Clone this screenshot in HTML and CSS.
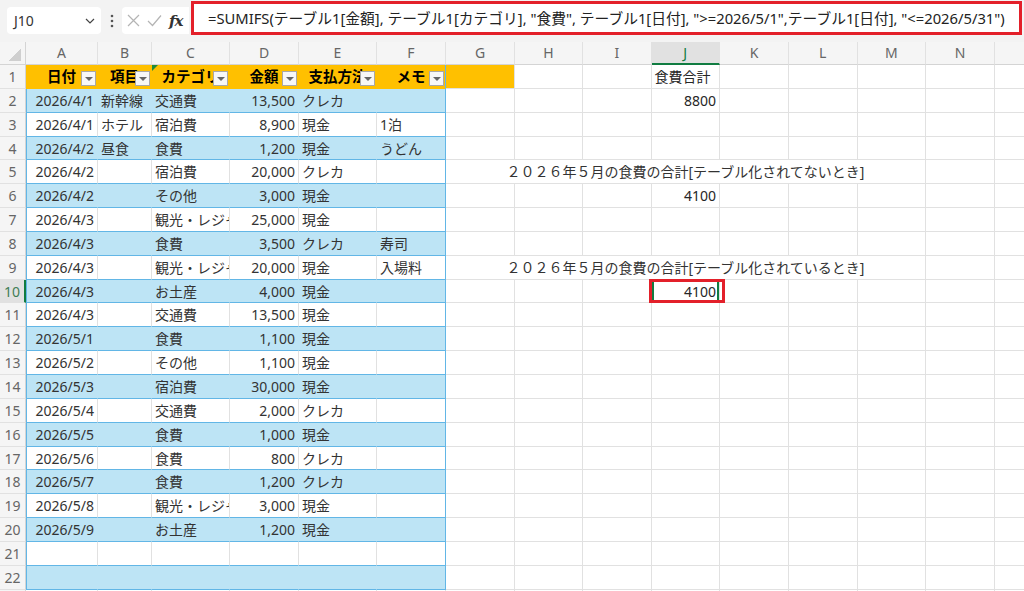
FILE: index.html
```html
<!DOCTYPE html>
<html lang="ja">
<head>
  <meta charset="UTF-8">
  <title>SUMIFS - 食費合計</title>
  <link rel="stylesheet" href="styles.css">
</head>
<body>
  <div class="toolbar">
    <div class="namebox">
      <span>J10</span>
      <svg class="chev" width="10" height="6" viewBox="0 0 10 6"><path d="M1 1 L5 5 L9 1" fill="none" stroke="#444" stroke-width="1.2"/></svg>
    </div>
    <svg class="dots" width="4" height="14" viewBox="0 0 4 14"><circle cx="2" cy="2" r="1.3"/><circle cx="2" cy="7" r="1.3"/><circle cx="2" cy="12" r="1.3"/></svg>
    <div class="fxbox">
      <svg width="13" height="13" viewBox="0 0 13 13"><path d="M1 1 L12 12 M12 1 L1 12" stroke="#b4b4b4" stroke-width="1.2"/></svg>
      <svg width="15" height="13" viewBox="0 0 15 13"><path d="M1 7 L5.5 11.5 L14 1.5" fill="none" stroke="#b4b4b4" stroke-width="1.2"/></svg>
      <span class="fx">fx</span>
    </div>
    <div class="formula">=SUMIFS(テーブル1[金額], テーブル1[カテゴリ], "食費", テーブル1[日付], "&gt;=2026/5/1",テーブル1[日付], "&lt;=2026/5/31")</div>
  </div>

  <div class="sheet" id="sheet"></div>

  <script>
    // O is off the right edge, so its letter isn't shown
    const cols = ['A', 'B', 'C', 'D', 'E', 'F', 'G', 'H', 'I', 'J', 'K', 'L', 'M', 'N', ''];
    const heads = ['日付', '項目', 'カテゴリ', '金額', '支払方法', 'メモ'];

    // date, item, category, amount, payment, memo
    const rows = [
      ['2026/4/1', '新幹線', '交通費', '13,500', 'クレカ', ''],
      ['2026/4/1', 'ホテル', '宿泊費', '8,900', '現金', '1泊'],
      ['2026/4/2', '昼食', '食費', '1,200', '現金', 'うどん'],
      ['2026/4/2', '', '宿泊費', '20,000', 'クレカ', ''],
      ['2026/4/2', '', 'その他', '3,000', '現金', ''],
      ['2026/4/3', '', '観光・レジャー', '25,000', '現金', ''],
      ['2026/4/3', '', '食費', '3,500', 'クレカ', '寿司'],
      ['2026/4/3', '', '観光・レジャー', '20,000', '現金', '入場料'],
      ['2026/4/3', '', 'お土産', '4,000', '現金', ''],
      ['2026/4/3', '', '交通費', '13,500', '現金', ''],
      ['2026/5/1', '', '食費', '1,100', '現金', ''],
      ['2026/5/2', '', 'その他', '1,100', '現金', ''],
      ['2026/5/3', '', '宿泊費', '30,000', '現金', ''],
      ['2026/5/4', '', '交通費', '2,000', 'クレカ', ''],
      ['2026/5/5', '', '食費', '1,000', '現金', ''],
      ['2026/5/6', '', '食費', '800', 'クレカ', ''],
      ['2026/5/7', '', '食費', '1,200', 'クレカ', ''],
      ['2026/5/8', '', '観光・レジャー', '3,000', '現金', ''],
      ['2026/5/9', '', 'お土産', '1,200', '現金', ''],
      ['', '', '', '', '', ''],
      ['', '', '', '', '', '']
    ];

    // cells right of the table, in column J
    const side = {
      1: { text: '食費合計' },
      2: { text: '8800', cls: 'num' },
      5: { text: '２０２６年５月の食費の合計[テーブル化されてないとき]', note: true },
      6: { text: '4100', cls: 'num' },
      9: { text: '２０２６年５月の食費の合計[テーブル化されているとき]', note: true },
      10: { text: '4100', cls: 'num', sel: true }
    };

    const sheet = document.getElementById('sheet');

    function cell(cls, text) {
      const el = document.createElement('div');
      el.className = 'cell ' + cls;
      if (text) el.textContent = text;
      sheet.appendChild(el);
      return el;
    }

    // column letters
    cell('corner');
    cols.forEach(c => cell('ch' + (c === 'J' ? ' sel' : ''), c));

    for (let r = 1; r <= 23; r++) {
      cell('rh' + (r === 10 ? ' sel' : ''), String(r));

      for (let i = 0; i < cols.length; i++) {
        const c = cols[i];

        if (r === 1 && i < 6) {
          const th = cell('th' + (i === 5 ? ' edge' : ''));
          const label = document.createElement('span');
          label.textContent = heads[i];
          th.appendChild(label);
          const btn = document.createElement('span');
          btn.className = 'drop';
          th.appendChild(btn);
          if (c === 'C') {
            const tri = document.createElement('span');
            tri.className = 'flag';
            th.appendChild(tri);
          }
          continue;
        }
        if (r === 1 && c === 'G') {
          cell('th fill');
          continue;
        }

        if (r >= 2 && r <= 22 && i < 6) {
          const v = rows[r - 2][i];
          let cls = 'tbl' + (r % 2 === 0 ? ' band' : '');
          if (i === 0 || i === 3) cls += ' num';
          if (i === 0) cls += ' first';
          if (i === 2) cls += ' clip';
          if (i === 5) cls += ' edge';
          cell(cls, v);
          continue;
        }

        const s = side[r];
        if (s && s.note && c === 'G') {
          const el = cell('note');
          const t = document.createElement('span');
          t.textContent = s.text;
          el.appendChild(t);
          i += 6; // spans G..M
          continue;
        }
        if (s && !s.note && c === 'J') {
          const el = cell(s.cls || '', s.text);
          if (s.sel) {
            el.classList.add('active');
            const mark = document.createElement('span');
            mark.className = 'mark';
            el.appendChild(mark);
          }
          continue;
        }
        cell('');
      }
    }
  </script>
</body>
</html>
```

FILE: styles.css
```css
body {
  margin: 0;
  width: 1024px;
  height: 591px;
  overflow: hidden;
  background: #fff;
  font-family: 'Noto Sans', 'Noto Sans CJK JP', sans-serif;
  color: #262626;
}

/* formula bar */
.toolbar {
  height: 42px;
  background: #f3f3f3;
  display: flex;
  align-items: flex-start;
  box-sizing: border-box;
}

.namebox {
  margin: 7px 0 0 7px;
  width: 94px;
  height: 27px;
  background: #fff;
  border-radius: 4px;
  display: flex;
  align-items: center;
  justify-content: space-between;
  padding: 0 6px 0 7px;
  box-sizing: border-box;
  font-size: 14px;
  color: #333;
}

.dots {
  margin: 14px 0 0 9px;
  fill: #555;
}

.fxbox {
  margin: 7px 0 0 8px;
  width: 67px;
  height: 27px;
  background: #fff;
  border-radius: 4px 0 0 4px;
  display: flex;
  align-items: center;
  gap: 7px;
  padding-left: 5px;
  box-sizing: border-box;
}

.fx {
  font-family: 'DejaVu Serif', 'Liberation Serif', serif;
  font-style: italic;
  font-weight: bold;
  font-size: 15px;
  color: #333;
  letter-spacing: -1px;
}

.formula {
  margin: 1px 2px 0 2px;
  flex: 1;
  height: 34px;
  border: 3px solid #e3202a;
  background: #fff;
  box-sizing: border-box;
  padding-left: 14px;
  font-size: 14.75px;
  line-height: 28px;
  white-space: nowrap;
  overflow: hidden;
  color: #222;
}

/* grid */
.sheet {
  display: grid;
  grid-template-columns: 26px 72px 54px 78px 69px 78px 69px 69px 68px 68.5px 68.5px 69px 68.5px 68.5px 69px 69px;
  grid-template-rows: 23px;
  grid-auto-rows: 23.85px;
}

.cell {
  position: relative;
  box-sizing: border-box;
  border-right: 1px solid #e1e1e1;
  border-bottom: 1px solid #e1e1e1;
  padding: 0 3px;
  font-size: 14px;
  line-height: 23px;
  white-space: nowrap;
  min-width: 0;
}

.corner {
  background: #f5f5f5 linear-gradient(135deg, transparent 55%, #cfcfcf 55%) no-repeat 7px 5px / 14px 14px;
  border-right-color: #d4d4d4;
  border-bottom-color: #d4d4d4;
}

.ch {
  background: #f5f5f5;
  color: #666;
  text-align: center;
  line-height: 22px;
  border-bottom-color: #d4d4d4;
}

.ch.sel {
  background: #e1e1e1;
  color: #107c41;
  border-bottom: 2px solid #107c41;
}

.rh {
  background: #f5f5f5;
  color: #666;
  text-align: center;
  padding: 0;
  border-right-color: #d4d4d4;
}

.rh.sel {
  background: #e1e1e1;
  color: #3f7d55;
  border-right: 2px solid #107c41;
}

/* table */
.th {
  background: #ffc000;
  border-right-color: #ffc000;
  border-bottom-color: #ffc000;
  font-weight: bold;
  color: #000;
  text-align: center;
  font-size: 14.5px;
}

.th.fill {
  border-bottom-color: #e1e1e1;
  border-right-color: #e1e1e1;
}

.drop {
  position: absolute;
  right: 1px;
  bottom: 2px;
  width: 15px;
  height: 15px;
  box-sizing: border-box;
  background: #f7f7f7;
  border: 1px solid #a8a8a8;
}

.drop::after {
  content: '';
  position: absolute;
  left: 3px;
  top: 5px;
  border-left: 4px solid transparent;
  border-right: 4px solid transparent;
  border-top: 4px solid #666;
}

.flag {
  position: absolute;
  left: 0;
  top: 0;
  border-top: 6px solid #1f8b3d;
  border-right: 6px solid transparent;
}

.tbl {
  border-bottom-color: #62b6e6;
  color: #333;
}

.tbl.band {
  background: #bde4f5;
  border-right-color: #bde4f5;
}

.tbl.first {
  box-shadow: inset 1px 0 0 #62b6e6;
}

.cell.edge {
  border-right-color: #62b6e6;
}

.num {
  text-align: right;
}

.clip {
  overflow: hidden;
  text-overflow: clip;
}

.note {
  grid-column: span 7;
  display: flex;
  justify-content: center;
  color: #333;
}

/* selected cell J10 */
.active {
  z-index: 2;
  box-shadow: inset 0 0 0 2px #107c41;
}

.mark {
  position: absolute;
  left: -3px;
  top: -1px;
  right: -6px;
  bottom: -1px;
  border: 3px solid #e3202a;
}
```
